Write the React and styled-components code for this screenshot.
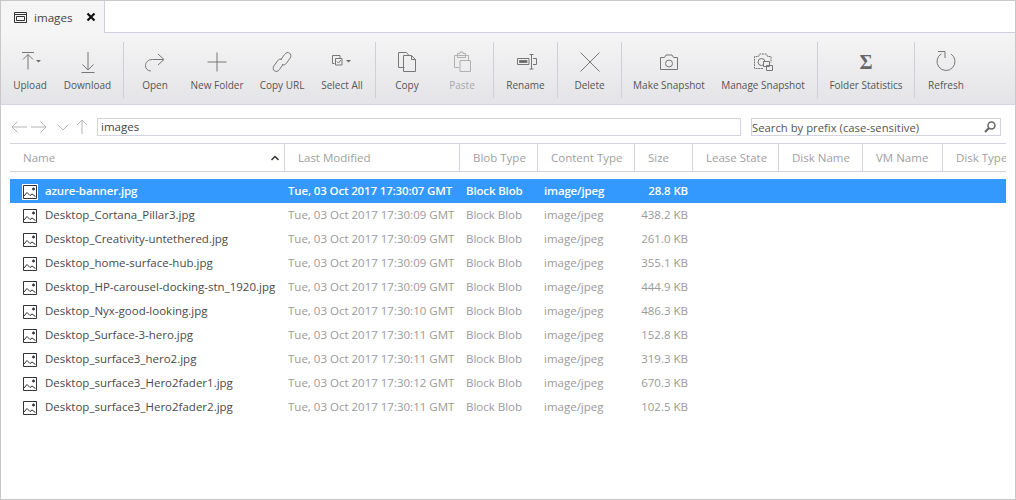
import React from "react";
import styled, { createGlobalStyle } from "styled-components";

const Global = createGlobalStyle`
  html, body { margin: 0; padding: 0; background: #fff; }
  body { font-family: "Open Sans", "Noto Sans", sans-serif; }
  * { box-sizing: border-box; }
`;

const Frame = styled.div`
  width: 1016px;
  height: 500px;
  border: 1px solid #c8c8c8;
  background: #fff;
  overflow: hidden;
  display: flex;
  flex-direction: column;
`;
const TabBar = styled.div`
  height: 32px;
  display: flex;
  flex: none;
`;
const Tab = styled.div`
  width: 104px;
  height: 32px;
  display: flex;
  align-items: center;
  background: #f5f5f5;
  border-right: 1px solid #cfcfe0;
  padding-left: 13px;
  font-size: 11.6px;
  color: #444;
`;
const TabTitle = styled.span`
  margin-left: 7px;
  width: 52px;
`;
const TabFill = styled.div`
  flex: 1;
  border-bottom: 1px solid #cfcfe0;
`;
const Toolbar = styled.div`
  height: 72px;
  flex: none;
  display: flex;
  background: linear-gradient(#f5f5f5, #e4e4e8);
  border-bottom: 1px solid #d2d2e2;
`;
const Group = styled.div`
  display: flex;
  height: 71px;
  position: relative;
  padding-right: ${(p) => (p.$pad || 0) + (p.$last ? 0 : 1)}px;
  &::after {
    content: "";
    display: ${(p) => (p.$last ? "none" : "block")};
    position: absolute;
    right: 0;
    top: 9px;
    bottom: 6px;
    width: 1px;
    background: #cfcfda;
  }
`;
const ToolButton = styled.div`
  width: ${(p) => p.$w}px;
  display: flex;
  flex-direction: column;
  align-items: center;
  padding-top: 17px;
  color: ${(p) => (p.$off ? "#a8a8a8" : "#555")};
`;
const ToolIcon = styled.svg`
  width: 24px;
  height: 24px;
  display: block;
  fill: none;
  stroke: ${(p) => (p.$off ? "#b0b0b0" : "#777")};
  stroke-width: 1;
`;
const ToolLabel = styled.span`
  font-size: 10px;
  line-height: 14px;
  margin-top: 4px;
  white-space: nowrap;
`;
const Sigma = styled.span`
  height: 24px;
  line-height: 24px;
  font-family: "Liberation Serif", serif;
  font-weight: 700;
  font-size: 20px;
  color: #666;
`;
const Body = styled.div`
  flex: 1;
  padding: 0 9px;
  display: flex;
  flex-direction: column;
`;
const NavBar = styled.div`
  height: 38px;
  flex: none;
  display: flex;
  align-items: center;
  padding-top: 6px;
  padding-left: 1px;
`;
const NavIcon = styled.svg`
  width: 16px;
  height: 16px;
  flex: none;
  margin-right: ${(p) => p.$mr}px;
  fill: none;
  stroke: #b4b4b4;
  stroke-width: 1;
`;
const Address = styled.div`
  width: 644px;
  height: 18px;
  border: 1px solid #d4d4e0;
  padding-left: 3px;
  font-size: 11.5px;
  line-height: 16px;
  color: #444;
  margin-left: 1px;
`;
const Search = styled.div`
  width: 250px;
  height: 18px;
  margin-left: 10px;
  border: 1px solid #d4d4e0;
  display: flex;
  align-items: center;
  justify-content: space-between;
  padding: 0 3px 0 0;
  font-size: 11.3px;
  color: #555;
`;
const Grid = styled.div`
  display: grid;
  grid-template-columns: 275px 175px 78px 97px 58px 86px 84px 80px 63px;
`;
const Head = styled(Grid)`
  height: 29px;
  border-top: 1px solid #d4d4e0;
  border-bottom: 1px solid #d4d4e0;
  margin-bottom: 7px;
`;
const HeadCell = styled.div`
  display: flex;
  align-items: center;
  justify-content: space-between;
  padding-left: 13px;
  padding-right: 4px;
  font-size: 11.5px;
  color: #a0a0a0;
  white-space: nowrap;
  overflow: hidden;
  border-right: ${(p) => (p.$last ? "none" : "1px solid #d4d4e0")};
`;
const Row = styled(Grid)`
  height: 24px;
  align-items: center;
  font-size: 11.5px;
  background: ${(p) => (p.$sel ? "#3399ff" : "transparent")};
  color: ${(p) => (p.$sel ? "#fff" : "#9a9a9a")};
  font-weight: ${(p) => (p.$sel ? 600 : 400)};
  letter-spacing: ${(p) => (p.$sel ? "-0.15px" : "0")};
`;
const NameCell = styled.div`
  display: flex;
  align-items: center;
  padding-left: 12px;
  color: ${(p) => (p.$sel ? "#fff" : "#4a4a4a")};
  white-space: nowrap;
`;
const NameText = styled.span`
  padding-bottom: 2px;
`;
const FileIcon = styled.svg`
  width: 16px;
  height: 16px;
  flex: none;
  margin-top: 2px;
  margin-right: 7px;
  background: ${(p) => (p.$sel ? "#fff" : "transparent")};
  fill: none;
  stroke: #333;
  stroke-width: 1;
`;
const Cell = styled.div`
  padding-left: ${(p) => p.$pl}px;
  padding-right: ${(p) => p.$pr || 0}px;
  padding-bottom: 2px;
  text-align: ${(p) => (p.$right ? "right" : "left")};
  white-space: nowrap;
`;

const I = {
  upload: (<><path d="M4 2.500h12M10 4.500v15M5 9.500 10 4.500l5 5" /><path d="M18 10h5l-2.500 2.500z" fill="#6a6a6a" stroke="none" /></>),
  download: (<path d="M12 2v18M6.500 14.500 12 20l5.500-5.500M5.500 22.500h13" />),
  open: (<path d="M20 9.500H9.500C5 9.500 2.500 12.500 2.500 15.500s2 5.500 5.500 5.500M15 4l6 5.500-6 5.500" />),
  plus: (<path d="M12 2.500v19M2.500 12h19" />),
  link: (<path d="M11 9.500 14.500 4.500c1.400-2 3.500-2.400 5-1.400s1.800 3 .6 5l-3.600 5c-1.400 2-3 2.200-4.500 1.400M13 14.500 9.500 19.500c-1.400 2-3.500 2.400-5 1.400s-1.800-3-.6-5l3.600-5c1.400-2 3-2.200 4.500-1.400" />),
  select: (<><path d="M4.500 13.500h-2v-8h7.500v2.500M5.500 8.500h6.500v6.500H5.500zM7 11.500l1.500 1.500 2.500-3" /><path d="M16 10h5l-2.500 2.500z" fill="#6a6a6a" stroke="none" /></>),
  copy: (<path d="M9.500 17.500H3.500V2.500h8l2.500 3M8.500 5.500h8l4 4v12h-12zM16.500 5.500v4h4" />),
  paste: (<path d="M9 17.500H4.500V5.500h3V3.500h2.500V2h3v1.500h2.500v2h3v5M7.500 5.500h8v2h-8zM10 10.500h10.500v11H10z" />),
  rename: (<><path d="M3.500 8.500h11.500v6H3.500z" /><path d="M5.500 10.500h7.500v2H5.500z" fill="#6a6a6a" /><path d="M15.500 4.500h4M17.500 4.500v14.500M15.500 19h4M19 8.500h3.500v6H19" /></>),
  del: (<path d="M2.500 2.500l19 19M21.500 2.500l-19 19" />),
  camera: (<><path d="M3.500 7.500h4l1.500-2.500h6l1.500 2.500h4v12h-17z" /><circle cx="12" cy="13.500" r="3.500" /></>),
  manage: (<><path d="M12 18.500H3.500V6.500h4l1-2.500h7l1 2.500h3.500v6" strokeDasharray="2 0.700" /><circle cx="10.500" cy="12" r="3.500" /><path d="M12.500 11.500h6v5h-6zM15.500 15.500h6v5h-6z" fill="#eee" /></>),
  refresh: (<path d="M7.500 3.700A9 9 0 1 0 17 4M4 1.500h7V8" />),
};

const Tool = ({ w, label, icon, off, sigma }) => (
  <ToolButton $w={w} $off={off}>
    {sigma ? <Sigma>Σ</Sigma> : <ToolIcon viewBox="0 0 24 24" $off={off}>{I[icon]}</ToolIcon>}
    <ToolLabel>{label}</ToolLabel>
  </ToolButton>
);

const rows = [
  ["azure-banner.jpg", "07", "28.8 KB"],
  ["Desktop_Cortana_Pillar3.jpg", "09", "438.2 KB"],
  ["Desktop_Creativity-untethered.jpg", "09", "261.0 KB"],
  ["Desktop_home-surface-hub.jpg", "09", "355.1 KB"],
  ["Desktop_HP-carousel-docking-stn_1920.jpg", "09", "444.9 KB"],
  ["Desktop_Nyx-good-looking.jpg", "10", "486.3 KB"],
  ["Desktop_Surface-3-hero.jpg", "11", "152.8 KB"],
  ["Desktop_surface3_hero2.jpg", "11", "319.3 KB"],
  ["Desktop_surface3_Hero2fader1.jpg", "12", "670.3 KB"],
  ["Desktop_surface3_Hero2fader2.jpg", "11", "102.5 KB"],
];
const heads = ["Last Modified", "Blob Type", "Content Type", "Size", "Lease State", "Disk Name", "VM Name", "Disk Type"];

export default function App() {
  return (
    <Frame>
      <Global />
      <TabBar>
        <Tab>
          <svg width="13" height="13" viewBox="0 0 13 13" fill="none" stroke="#333">
            <path d="M.5 1.500h12v10H.5zM.5 3.500h12M2.500 5.500h8v4h-8z" />
          </svg>
          <TabTitle>images</TabTitle>
          <svg width="10" height="10" viewBox="0 0 10 10" fill="none" stroke="#111" strokeWidth="2.200">
            <path d="M1.500 1.500l7 7M8.500 1.500l-7 7" />
          </svg>
        </Tab>
        <TabFill />
      </TabBar>
      <Toolbar>
        <Group $pad={7}>
          <Tool w={58} label="Upload" icon="upload" />
          <Tool w={57} label="Download" icon="download" />
        </Group>
        <Group $pad={7}>
          <Tool w={62} label="Open" icon="open" />
          <Tool w={62} label="New Folder" icon="plus" />
          <Tool w={68} label="Copy URL" icon="link" />
          <Tool w={52} label="Select All" icon="select" />
        </Group>
        <Group $pad={7}>
          <Tool w={62} label="Copy" icon="copy" />
          <Tool w={48} label="Paste" icon="paste" off />
        </Group>
        <Group><Tool w={63} label="Rename" icon="rename" /></Group>
        <Group><Tool w={63} label="Delete" icon="del" /></Group>
        <Group $pad={7}>
          <Tool w={94} label="Make Snapshot" icon="camera" />
          <Tool w={94} label="Manage Snapshot" icon="manage" />
        </Group>
        <Group><Tool w={96} label="Folder Statistics" sigma /></Group>
        <Group $last><Tool w={62} label="Refresh" icon="refresh" /></Group>
      </Toolbar>
      <Body>
        <NavBar>
          <NavIcon viewBox="0 0 16 16" $mr={4}><path d="M16 8H1M6.500 2.500 1 8l5.500 5.500" /></NavIcon>
          <NavIcon viewBox="0 0 16 16" $mr={8}><path d="M0 8h15M9.500 2.500 15 8l-5.500 5.500" /></NavIcon>
          <NavIcon viewBox="0 0 16 16" $mr={3}><path d="M2.500 5.500 8 11l5.500-5.500" /></NavIcon>
          <NavIcon viewBox="0 0 16 16" $mr={6}><path d="M8 15V1M3 6l5-5 5 5" /></NavIcon>
          <Address>images</Address>
          <Search>
            <span>Search by prefix (case-sensitive)</span>
            <svg width="14" height="14" viewBox="0 0 14 14" fill="none" stroke="#666" strokeWidth="1.500">
              <circle cx="8.500" cy="5.500" r="3.500" />
              <path d="M6 8 2 12" strokeWidth="2.200" />
            </svg>
          </Search>
        </NavBar>
        <Head>
          <HeadCell>
            Name
            <svg width="10" height="8" viewBox="0 0 10 8" fill="none" stroke="#333" strokeWidth="1.500">
              <path d="M1.500 6 5 2.500 8.500 6" />
            </svg>
          </HeadCell>
          {heads.map((h, i) => (
            <HeadCell key={h} $last={i === heads.length - 1}>{h}</HeadCell>
          ))}
        </Head>
        {rows.map(([name, sec, size], i) => (
          <Row key={name} $sel={i === 0}>
            <NameCell $sel={i === 0}>
              <FileIcon viewBox="0 0 16 16" $sel={i === 0}>
                <path d="M1.500 1.500h13v13h-13zM2 12l3-3.500 3 3 2-1.500 3.500 2.500" />
                <circle cx="11.500" cy="5" r="1" fill="#333" />
              </FileIcon>
              <NameText>{name}</NameText>
            </NameCell>
            <Cell $pl={3}>Tue, 03 Oct 2017 17:30:{sec} GMT</Cell>
            <Cell $pl={6}>Block Blob</Cell>
            <Cell $pl={6}>image/jpeg</Cell>
            <Cell $right $pr={5}>{size}</Cell>
          </Row>
        ))}
      </Body>
    </Frame>
  );
}
